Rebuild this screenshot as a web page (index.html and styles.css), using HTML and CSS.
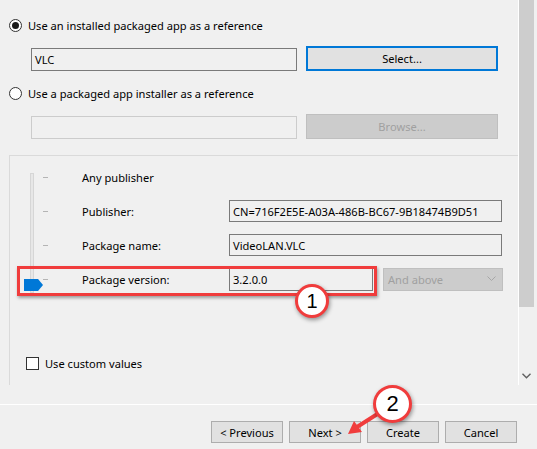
FILE: index.html
```html
<!DOCTYPE html>
<html lang="en">
<head>
  <meta charset="UTF-8">
  <title>Package identity</title>
  <link rel="stylesheet" href="styles.css">
</head>
<body>
  <div class="window">
    <div class="viewport">
      <div class="pane">
        <label class="radio-row"><span class="radio checked"></span>Use an installed packaged app as a reference</label>
        <div class="field-row">
          <div class="textbox source">VLC</div>
          <button class="btn wide focused">Select...</button>
        </div>
        <label class="radio-row second"><span class="radio"></span>Use a packaged app installer as a reference</label>
        <div class="field-row">
          <div class="textbox source disabled"></div>
          <button class="btn wide disabled">Browse...</button>
        </div>

        <div class="group">
          <div class="settings">
            <div class="slider">
              <div class="track"></div>
              <div class="ticks"><i></i><i></i><i></i><i></i></div>
              <div class="thumb"></div>
            </div>
            <div class="rows">
              <div class="row"><span class="label">Any publisher</span></div>
              <div class="row"><span class="label">Publisher:</span><div class="textbox long">CN=716F2E5E-A03A-486B-BC67-9B18474B9D51</div></div>
              <div class="row"><span class="label">Package name:</span><div class="textbox long">VideoLAN.VLC</div></div>
              <div class="row">
                <span class="label">Package version:</span>
                <div class="textbox short">3.2.0.0</div>
                <div class="combo">And above
                  <svg width="9" height="6" viewBox="0 0 9 6"><path d="M0.5 0.5 L4.5 4.5 L8.5 0.5" fill="none" stroke="#a6a6a6" stroke-width="1"/></svg>
                </div>
              </div>
            </div>
          </div>
          <label class="check-row"><span class="checkbox"></span>Use custom values</label>
        </div>
      </div>
      <div class="scrollbar">
        <div class="scroll-thumb"></div>
        <svg class="scroll-down" width="9" height="6" viewBox="0 0 9 6"><path d="M0.5 0.8 L4.5 4.8 L8.5 0.8" fill="none" stroke="#606060" stroke-width="1.4"/></svg>
      </div>
    </div>

    <div class="footer">
      <button class="btn">&lt; Previous</button>
      <button class="btn">Next &gt;</button>
      <button class="btn">Create</button>
      <button class="btn">Cancel</button>
    </div>

    <!-- annotations drawn over the dialog -->
    <div class="mark-rect"></div>
    <div class="mark-num one">1</div>
    <svg class="mark-arrow" width="60" height="40" viewBox="0 0 60 40">
      <path d="M34 8 L12 22" stroke="#f03c3c" stroke-width="4" stroke-linecap="round"/>
      <path d="M3 29 L9 16 L17 27 Z" fill="#f03c3c"/>
    </svg>
    <div class="mark-num two">2</div>
  </div>
</body>
</html>
```

FILE: styles.css
```css
body { margin: 0; background: #f0f0f0; color: #000; font-family: "Noto Sans", "Open Sans", sans-serif; font-size: 11.1px; }
.window { position: relative; width: 537px; height: 449px; overflow: hidden; background: #f0f0f0; }

.viewport { display: flex; height: 385px; }
.pane { width: 518px; height: 385px; overflow: hidden; padding: 17px 0 0 9px; box-sizing: border-box; }

.radio-row { display: flex; align-items: center; height: 16px; gap: 6px; }
.radio-row.second { margin-top: 14px; }
.radio { width: 13px; height: 13px; box-sizing: border-box; border: 1px solid #333; border-radius: 50%; background: #fff; display: flex; align-items: center; justify-content: center; margin-top: 1px; }
.radio.checked::before { content: ""; width: 7px; height: 7px; border-radius: 50%; background: #1a1a1a; }

.field-row { display: flex; align-items: flex-end; margin: 13px 0 0 22px; height: 25px; gap: 9px; }
.textbox { box-sizing: border-box; height: 23px; border: 1px solid #7a7a7a; background: #f0f0f0; padding: 0 3px; display: flex; align-items: center; white-space: nowrap; overflow: hidden; }
.textbox.source { width: 266px; }
.textbox.disabled { border-color: #cccccc; }

.btn { box-sizing: border-box; height: 22px; width: 72px; border: 1px solid #adadad; background: #e1e1e1; font: inherit; color: #000; padding: 0; }
.btn.wide { width: 192px; height: 25px; }
.btn.focused { border: 2px solid #0078d7; }
.btn.disabled { background: #cccccc; border-color: #bfbfbf; color: #a0a0a0; }

.group { margin-top: 16px; border-top: 1px solid #dadada; border-left: 1px solid #dadada; padding-top: 4px; height: 260px; }
.settings { display: flex; }
.slider { position: relative; width: 72px; display: flex; gap: 9px; padding-left: 20px; box-sizing: border-box; }
.track { width: 4px; height: 120px; margin-top: 13px; box-sizing: border-box; border: 1px solid #d6d6d6; background: #e7e7e7; }
.ticks { display: flex; flex-direction: column; }
.ticks i { display: block; width: 5px; height: 34px; background: linear-gradient(#b4b4b4, #b4b4b4) no-repeat center / 5px 1px; }
.thumb { position: absolute; left: 14px; top: 119px; width: 19px; height: 12px; background: #0078d7; clip-path: polygon(0 0, 74% 0, 100% 50%, 74% 100%, 0 100%); }

.rows { display: flex; flex-direction: column; }
.row { display: flex; align-items: center; height: 34px; }
.label { width: 147px; }
.textbox.long { width: 273px; height: 22px; }
.textbox.short { width: 144px; height: 24px; margin-right: 10px; }
.combo { box-sizing: border-box; width: 120px; height: 23px; background: #cccccc; border: 1px solid #bfbfbf; color: #a0a0a0; display: flex; align-items: center; justify-content: space-between; padding: 0 6px 0 4px; }

.check-row { display: flex; align-items: center; gap: 6px; margin: 60px 0 0 16px; height: 14px; }
.checkbox { width: 13px; height: 13px; box-sizing: border-box; border: 1px solid #333; background: #fff; margin-top: 1px; }

.scrollbar { width: 19px; height: 385px; border-left: 1px solid #fff; box-sizing: border-box; display: flex; flex-direction: column; }
.scroll-thumb { width: 15px; height: 307px; background: #cdcdcd; }
.scroll-down { margin: 66px 0 0 3px; }

.footer { height: 64px; box-sizing: border-box; margin-top: 19px; border-top: 1px solid #fff; display: flex; justify-content: flex-end; gap: 6px; padding: 16px 20px 0 0; }

.mark-rect { position: absolute; left: 17px; top: 266px; width: 360px; height: 30px; box-sizing: border-box; border: 3px solid #f03c3c; box-shadow: 1px 2px 3px rgba(0, 0, 0, 0.35); }
.mark-num { position: absolute; box-sizing: border-box; border: 3px solid #f03c3c; border-radius: 50%; background: #fff; display: flex; align-items: center; justify-content: center; font-family: "Liberation Sans", Arial, sans-serif; box-shadow: 1px 2px 4px rgba(0, 0, 0, 0.4); }
.mark-num.one { left: 295px; top: 284px; width: 34px; height: 34px; font-size: 20px; }
.mark-num.two { left: 373px; top: 385px; width: 39px; height: 38px; font-size: 22px; }
.mark-arrow { position: absolute; left: 345px; top: 405px; }
```
